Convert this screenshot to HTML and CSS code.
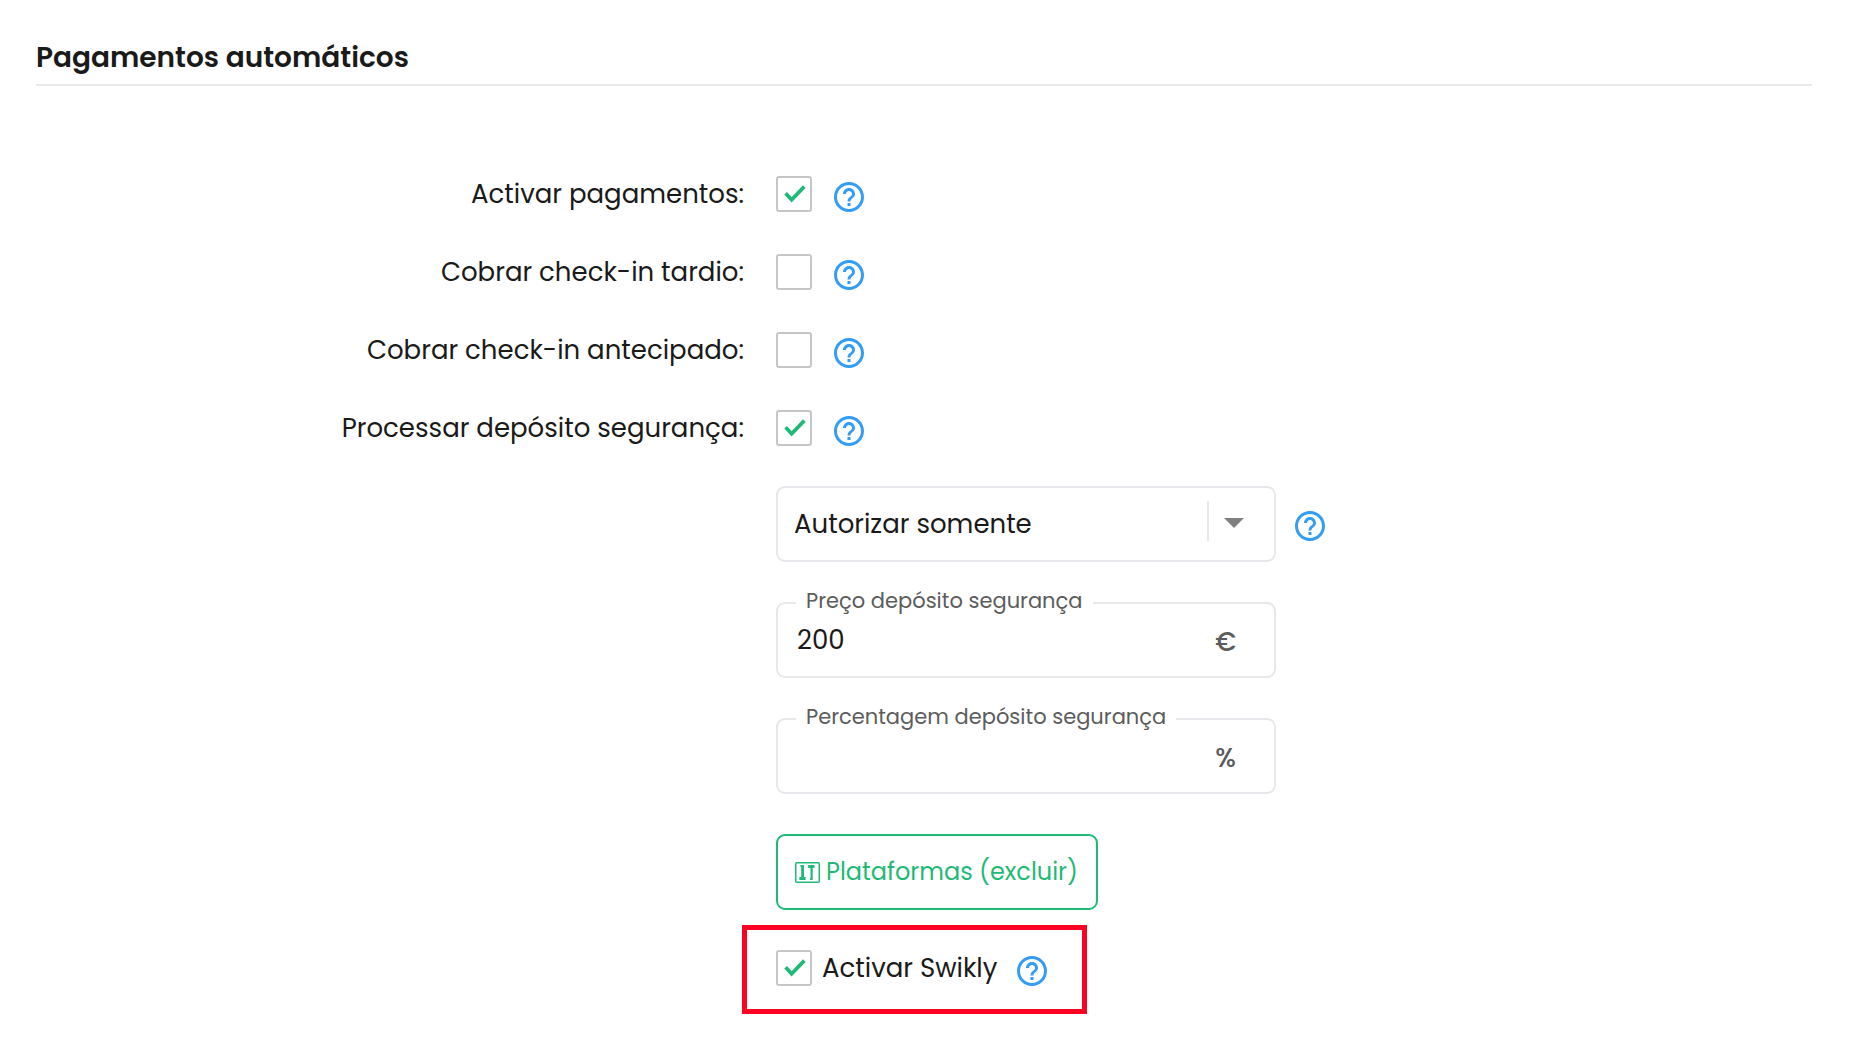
FILE: index.html
```html
<!DOCTYPE html>
<html lang="pt">
  <head>
    <meta charset="utf-8">
    <title>Pagamentos automáticos</title>
    <link rel="stylesheet" href="styles.css">
  </head>
  <body>
    <svg class="sprite" aria-hidden="true">
      <symbol id="help" viewBox="0 0 24 24">
        <path d="M11 18h2v-2h-2v2zm1-16C6.480 2 2 6.480 2 12s4.480 10 10 10 10-4.480 10-10S17.520 2 12 2zm0 18c-4.410 0-8-3.590-8-8s3.590-8 8-8 8 3.590 8 8-3.590 8-8 8zm0-14c-2.210 0-4 1.790-4 4h2c0-1.100.900-2 2-2s2 .900 2 2c0 2-3 1.750-3 5h2c0-2.250 3-2.500 3-5 0-2.210-1.790-4-4-4z"/>
      </symbol>
    </svg>
    <form class="payments">
      <h2 class="title">Pagamentos automáticos</h2>

      <div class="row">
        <label class="row-label" for="activePayments">Activar pagamentos:</label>
        <div class="row-content">
          <input type="checkbox" class="check" id="activePayments" checked>
          <button type="button" class="help" aria-label="Ajuda"><svg><use href="#help"/></svg></button>
        </div>
      </div>
      <div class="row">
        <label class="row-label" for="lateCheckin">Cobrar check-in tardio:</label>
        <div class="row-content">
          <input type="checkbox" class="check" id="lateCheckin">
          <button type="button" class="help" aria-label="Ajuda"><svg><use href="#help"/></svg></button>
        </div>
      </div>
      <div class="row">
        <label class="row-label" for="earlyCheckin">Cobrar check-in antecipado:</label>
        <div class="row-content">
          <input type="checkbox" class="check" id="earlyCheckin">
          <button type="button" class="help" aria-label="Ajuda"><svg><use href="#help"/></svg></button>
        </div>
      </div>
      <div class="row">
        <label class="row-label" for="deposit">Processar depósito segurança:</label>
        <div class="row-content">
          <input type="checkbox" class="check" id="deposit" checked>
          <button type="button" class="help" aria-label="Ajuda"><svg><use href="#help"/></svg></button>
        </div>
      </div>

      <div class="row">
        <div class="options">
          <div class="option-line">
            <div class="select-box">
              <select class="select" aria-label="Processar depósito">
                <option>Autorizar somente</option>
              </select>
              <span class="arrow"></span>
            </div>
            <button type="button" class="help" aria-label="Ajuda"><svg><use href="#help"/></svg></button>
          </div>

          <div class="field">
            <label class="field-label" for="price">Preço depósito segurança</label>
            <input type="text" class="field-input" id="price" value="200">
            <span class="unit">€</span>
          </div>
          <div class="field">
            <label class="field-label" for="percent">Percentagem depósito segurança</label>
            <input type="text" class="field-input" id="percent">
            <span class="unit">%</span>
          </div>

          <button type="button" class="platforms">
            <svg class="platforms-icon" viewBox="0 0 25 21">
              <rect x="0.750" y="0.750" width="23.500" height="19.500" rx="1" fill="none" stroke="currentColor" stroke-width="1.500"/>
              <path d="M5.300 3h3.700v12h1.600v3H4.300v-3h1.900V4.500h-.900zM13.200 3h6.300v3h-1.800v12h-2.700v-1.500h.500V6h-2.300z" fill="currentColor"/>
            </svg>
            Plataformas (excluir)
          </button>

          <div class="swikly">
            <input type="checkbox" class="check" id="swikly" checked>
            <label class="swikly-label" for="swikly">Activar Swikly</label>
            <button type="button" class="help" aria-label="Ajuda"><svg><use href="#help"/></svg></button>
          </div>
        </div>
      </div>
    </form>
  </body>
</html>
```
FILE: styles.css
```css
* {
  box-sizing: border-box;
}
body {
  margin: 0;
  background-color: white;
  color: #1a1a1a;
  font-family: Poppins, Inter, sans-serif;
  font-size: 26px;
  line-height: 40px;
}
input, select, button {
  font: inherit;
  color: inherit;
}
.sprite {
  display: none;
}
.payments {
  padding: 38px 48px 36px 36px;
}
.title {
  margin: 0 0 90px;
  padding-bottom: 6px;
  border-bottom: 2px solid #e7e7ec;
  font-size: 28px;
  font-weight: 600;
}
.row {
  display: grid;
  grid-template-columns: 5fr 7fr;
  margin-bottom: 38px;
}
.row-label {
  padding-right: 32px;
  text-align: right;
  line-height: 36px;
}
.row-content {
  display: flex;
  gap: 19px;
  height: 40px;
}
.check {
  appearance: none;
  flex: none;
  width: 36px;
  height: 36px;
  margin: 0;
  border: 2px solid #c6c6c6;
  border-radius: 3px;
  cursor: pointer;
}
.check:checked {
  background: url("data:image/svg+xml,%3Csvg xmlns='http://www.w3.org/2000/svg' viewBox='0 0 36 36'%3E%3Cpath d='M9.6 17.2l6 6.600L28.300 10.600' fill='none' stroke='%231fb978' stroke-width='3.700'/%3E%3C/svg%3E") border-box;
}
.help {
  flex: none;
  width: 36px;
  height: 36px;
  margin-top: 3px;
  padding: 0;
  border: none;
  background: none;
  cursor: pointer;
}
.help svg {
  display: block;
  width: 36px;
  height: 36px;
  fill: #339cf5;
}
.options {
  grid-column: 2;
  display: flex;
  flex-direction: column;
  align-items: flex-start;
  gap: 40px;
  margin-top: -2px;
}
.option-line {
  display: flex;
  align-items: center;
  gap: 16px;
}
.select-box {
  position: relative;
  width: 500px;
}
.select {
  appearance: none;
  display: block;
  width: 100%;
  height: 76px;
  padding: 0 84px 0 16px;
  border: 2px solid #e7e7ec;
  border-radius: 9px;
  background: white;
}
.arrow {
  position: absolute;
  top: 15px;
  right: 32px;
  width: 37px;
  height: 40px;
  border-left: 2px solid #e7e7ec;
  pointer-events: none;
}
.arrow::after {
  content: "";
  position: absolute;
  top: 17px;
  right: 0;
  border: 10px solid transparent;
  border-top-color: #808080;
  border-bottom: none;
}
.field {
  position: relative;
  display: flex;
  align-items: center;
  width: 500px;
  height: 76px;
  padding: 0 38px 0 19px;
  border: 2px solid #e7e7ec;
  border-radius: 9px;
}
.field-label {
  position: absolute;
  top: -19px;
  left: 18px;
  padding: 0 10px;
  background: white;
  color: #5c5c5c;
  font-size: 21px;
  line-height: 32px;
}
.field-input {
  flex: 1;
  min-width: 0;
  padding: 0;
  border: none;
  outline: none;
  background: none;
}
.unit {
  padding-top: 4px;
  color: #5c5c5c;
  font-weight: 500;
}
.platforms {
  display: flex;
  align-items: center;
  gap: 6px;
  height: 76px;
  padding: 0 18px 0 17px;
  border: 2px solid #1fb978;
  border-radius: 9px;
  background: white;
  color: #1fb978;
  font-size: 24px;
  cursor: pointer;
}
.platforms-icon {
  width: 25px;
  height: 21px;
}
.swikly {
  display: flex;
  gap: 10px;
  margin: -25px 0 0 -34px;
  padding: 20px 32px 20px 29px;
  border: 5px solid #ff0022;
}
.swikly-label {
  margin-right: 7px;
  line-height: 36px;
}
```
